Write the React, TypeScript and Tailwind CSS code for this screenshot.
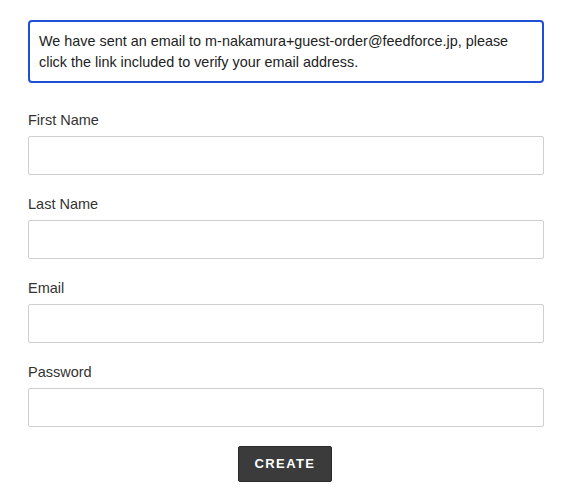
import React from 'react';

const fields = ['First Name', 'Last Name', 'Email', 'Password'];

function App() {
  return (
    <div className="min-h-screen bg-white font-['Liberation_Sans',Arial,sans-serif] text-[#333]">
      <div className="ml-[28px] w-[516px] pt-[20px]">
        {/* Notice */}
        <div className="rounded-[4px] border-2 border-[#1f4fd4] px-[9px] pt-[9px] pb-[8px] text-[14.4px] leading-[21px] text-[#222]">
          We have sent an email to m-nakamura+guest-order@feedforce.jp, please click the link included to verify your email address.
        </div>

        {/* Form */}
        <form className="mt-[27px]" onSubmit={(e) => e.preventDefault()}>
          {fields.map((label) => (
            <div key={label} className="mb-[19px]">
              <label className="block text-[14.5px] leading-[20px] mb-[6px]">{label}</label>
              <input
                type={label === 'Password' ? 'password' : label === 'Email' ? 'email' : 'text'}
                className="block w-full h-[39px] rounded-[2px] border border-[#cfcfcf] bg-white px-2 outline-none"
              />
            </div>
          ))}
          <div className="flex justify-center">
            <button
              type="submit"
              className="ml-[-2px] h-[36px] w-[94px] rounded-[2px] border border-[#2a2a2a] bg-[#3b3b3b] text-[13px] font-bold tracking-[1.4px] text-white"
            >
              CREATE
            </button>
          </div>
        </form>
      </div>
    </div>
  );
}

export default App;
